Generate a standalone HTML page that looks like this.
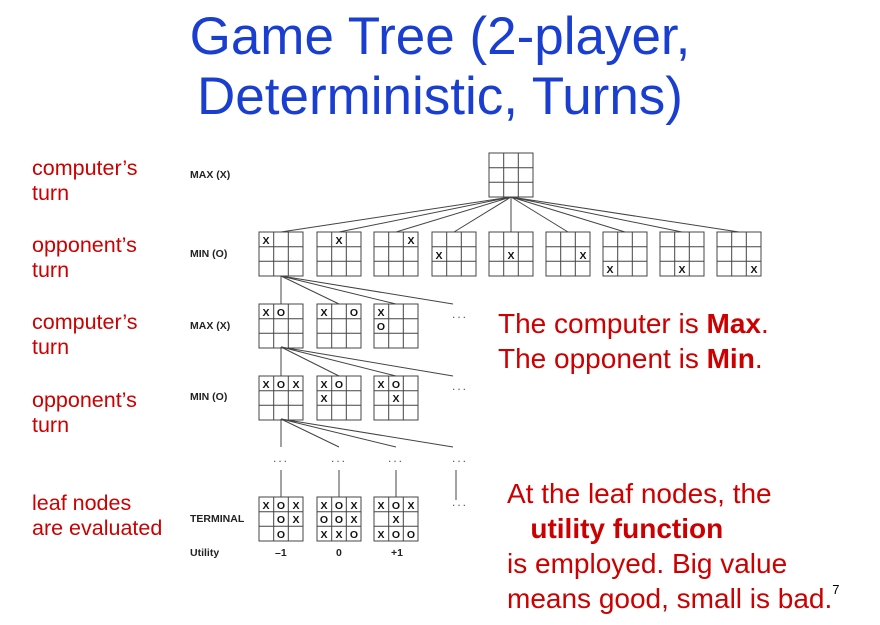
<!DOCTYPE html>
<html><head><meta charset="utf-8"><style>
body{margin:0;width:880px;height:625px;background:#fff;overflow:hidden;position:relative;font-family:"Liberation Sans",sans-serif}
.t{position:absolute;left:0;width:880px;text-align:center;color:#1a3fd0;font-size:53px;line-height:60px}
.r{position:absolute;color:#cc0000;font-size:21.5px;line-height:25px}
.b{position:absolute;color:#cc0000;font-size:28px;line-height:35px;white-space:nowrap}
sup{line-height:0}
</style></head><body>
<div class="t" style="top:7px">Game Tree (2-player,<br>Deterministic, Turns)</div>
<div class="r" style="left:32px;top:156px">computer’s<br>turn</div>
<div class="r" style="left:32px;top:233px">opponent’s<br>turn</div>
<div class="r" style="left:32px;top:310px">computer’s<br>turn</div>
<div class="r" style="left:32px;top:388px">opponent’s<br>turn</div>
<div class="r" style="left:32px;top:491px">leaf nodes<br>are evaluated</div>
<div class="b" style="left:498px;top:306px">The computer is <b>Max</b>.<br>The opponent is <b>Min</b>.</div>
<div class="b" style="left:507px;top:476px">At the leaf nodes, the<br>&nbsp;&nbsp;&nbsp;<b>utility function</b><br>is employed. Big value<br>means good, small is bad.<sup style="color:#000;font-size:13px;vertical-align:14px">7</sup></div>
<svg width="880" height="625" style="position:absolute;left:0;top:0" font-family="Liberation Sans,sans-serif">
<defs><g id="g" fill="none" stroke="#444" stroke-width="1"><rect x="0" y="0" width="44" height="44"/><path d="M14.7 0V44M29.3 0V44M0 14.7H44M0 29.3H44"/></g></defs>
<g font-size="10.5" font-weight="bold" fill="#222">
<text x="190" y="178">MAX (X)</text><text x="190" y="257">MIN (O)</text>
<text x="190" y="329">MAX (X)</text><text x="190" y="400">MIN (O)</text>
<text x="190" y="522">TERMINAL</text><text x="190" y="556">Utility</text>
<text x="275" y="556">–1</text><text x="336" y="556">0</text><text x="391" y="556">+1</text>
</g>
<g stroke="#444" stroke-width="1">
<path d="M511 197L281 232M511 197L339 232M511 197L396 232M511 197L454 232M511 197L511 232M511 197L568 232M511 197L625 232M511 197L682 232M511 197L739 232"/>
<path d="M281 276L281 304M281 276L339 304M281 276L396 304M281 276L453 304"/>
<path d="M281 347L281 376M281 347L339 376M281 347L396 376M281 347L453 376"/>
<path d="M281 419L281 447M281 419L339 447M281 419L396 447M281 419L453 447"/>
<path d="M281 470V497M339 470V497M396 470V497M456 470V500"/>
</g>
<g font-size="12" fill="#555" letter-spacing="2">
<text x="452" y="318">...</text><text x="452" y="390">...</text>
<text x="273" y="462">...</text><text x="331" y="462">...</text><text x="388" y="462">...</text><text x="452" y="462">...</text>
<text x="452" y="506">...</text>
</g>
<use href="#g" x="489" y="153"/>
<use href="#g" x="259" y="232"/><use href="#g" x="317" y="232"/><use href="#g" x="374" y="232"/><use href="#g" x="432" y="232"/><use href="#g" x="489" y="232"/><use href="#g" x="546" y="232"/><use href="#g" x="603" y="232"/><use href="#g" x="660" y="232"/><use href="#g" x="717" y="232"/>
<use href="#g" x="259" y="304"/><use href="#g" x="317" y="304"/><use href="#g" x="374" y="304"/>
<use href="#g" x="259" y="376"/><use href="#g" x="317" y="376"/><use href="#g" x="374" y="376"/>
<use href="#g" x="259" y="497"/><use href="#g" x="317" y="497"/><use href="#g" x="374" y="497"/>
<g font-size="10.5" font-weight="bold" fill="#111" text-anchor="middle">
<text x="266" y="244">X</text><text x="339" y="244">X</text><text x="411" y="244">X</text>
<text x="439" y="259">X</text><text x="511" y="259">X</text><text x="583" y="259">X</text>
<text x="610" y="273">X</text><text x="682" y="273">X</text><text x="754" y="273">X</text>
<text x="266" y="316">X</text><text x="281" y="316">O</text>
<text x="324" y="316">X</text><text x="354" y="316">O</text>
<text x="381" y="316">X</text><text x="381" y="330">O</text>
<text x="266" y="388">X</text><text x="281" y="388">O</text><text x="296" y="388">X</text>
<text x="324" y="388">X</text><text x="339" y="388">O</text><text x="324" y="402">X</text>
<text x="381" y="388">X</text><text x="396" y="388">O</text><text x="396" y="402">X</text>
<text x="266" y="509">X</text><text x="281" y="509">O</text><text x="296" y="509">X</text>
<text x="281" y="523">O</text><text x="296" y="523">X</text><text x="281" y="538">O</text>
<text x="324" y="509">X</text><text x="339" y="509">O</text><text x="354" y="509">X</text>
<text x="324" y="523">O</text><text x="339" y="523">O</text><text x="354" y="523">X</text>
<text x="324" y="538">X</text><text x="339" y="538">X</text><text x="354" y="538">O</text>
<text x="381" y="509">X</text><text x="396" y="509">O</text><text x="411" y="509">X</text>
<text x="396" y="523">X</text>
<text x="381" y="538">X</text><text x="396" y="538">O</text><text x="411" y="538">O</text>
</g>
</svg>
</body></html>
